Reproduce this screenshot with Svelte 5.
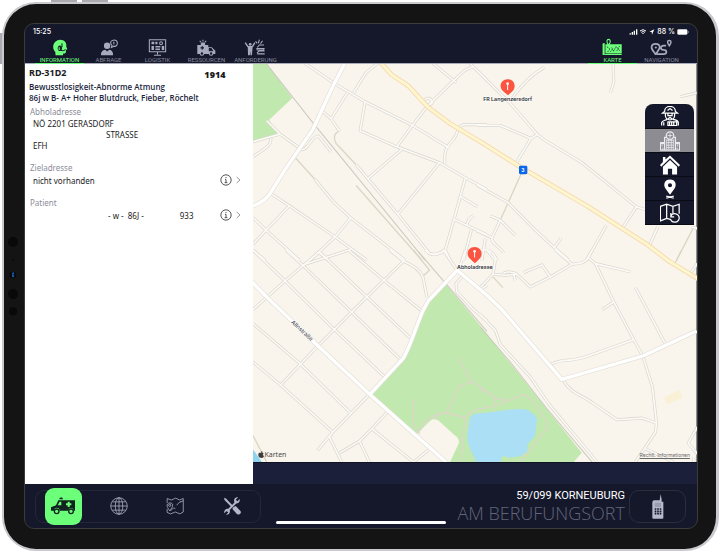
<script>
  const tabs = [
    { id: 'information', label: 'INFORMATION' },
    { id: 'abfrage', label: 'ABFRAGE' },
    { id: 'logistik', label: 'LOGISTIK' },
    { id: 'ressourcen', label: 'RESSOURCEN' },
    { id: 'anforderung', label: 'ANFORDERUNG' }
  ];
  const mapTabs = [
    { id: 'karte', label: 'KARTE' },
    { id: 'navigation', label: 'NAVIGATION' }
  ];
  let activeTab = $state('information');
  let activeMapTab = $state('karte');
  let activeLayer = $state('hospital');

  const layers = [
    { id: 'crew', label: 'Einsatzkraft' },
    { id: 'hospital', label: 'Krankenhaus' },
    { id: 'home', label: 'Wache' },
    { id: 'pin', label: 'Einsatzort' },
    { id: 'reset', label: 'Karte zurücksetzen' }
  ];
  const tools = [
    { id: 'globe', label: 'Web' },
    { id: 'plan', label: 'Plan' },
    { id: 'settings', label: 'Werkzeuge' }
  ];

  // Street network, split into four quadrants with their own origin
  const quads = [
    {
      at: '-9 -12',
      streets: [
        'M165 10L255 72 345 125 485 195 595 262',
        'M292 98L243 176 M218 155L243 176 268 213',
        'M345 125L330 212 440 260 568 308 640 350 710 388',
        'M310 98L348 38 382 10',
        'M610 62L530 140 485 198 440 260 M455 268L352 356',
        'M548 10L618 68 M610 62L645 30 668 20 710 60 M668 20L660 10',
        'M530 140C510 120 535 105 545 122 550 132 538 135 530 135',
        'M710 194H640C620 200 625 215 612 235 590 260 580 270 584 312',
        'M568 308L443 462',
        'M318 314L443 462 538 580C555 585 570 580 585 570L612 475 645 355',
        'M632 410L682 440 M612 478L710 524 M650 495C652 478 662 470 670 465 M663 510L640 600',
        'M50 182L90 222 150 265 M9 245L90 222 M62 235C65 250 58 258 9 290',
        'M150 268C175 275 180 230 205 228L243 275',
        'M195 358L250 425 302 473 465 600',
        'M62 400L118 437 255 530 350 600',
        'M118 437L48 510 9 552 M302 473L255 530 180 600',
        'M9 472L48 510 148 600 M9 570L45 600 M205 575L235 600 M585 570L600 600'
      ],
      tracks: ['M135 292L195 358', 'M310 98L320 80', 'M268 213C250 220 250 235 258 250L318 314', 'M318 376L515 600'],
      rails: ['M50 12L190 190 525 600']
    },
    {
      at: '681 -12',
      streets: [
        'M-5 36L90 130 170 222 190 238 305 308 468 440 500 450',
        'M95 115C120 80 150 45 192 22',
        'M-10 196H60L152 235 170 224 M152 235L108 308',
        'M398 12L400 65 390 98 M600 110L648 98',
        'M-10 375L83 427 160 505 222 562 265 600',
        'M222 562L242 534 M378 495L320 598 M468 440L423 508',
        'M30 467L60 480 105 525 M60 480L35 532 C30 550 60 560 70 578',
        'M-10 512L35 532 M15 535L5 600 M5 570C30 565 40 580 50 600',
        'M532 500L505 560 M632 500L650 505'
      ],
      tracks: ['M122 342L60 480', 'M640 500L588 600'],
      rails: []
    },
    {
      at: '-9 558',
      streets: [
        'M9 0L105 92 250 235 402 378',
        'M108 0L158 45 302 183 448 325',
        'M208 5L350 140 482 265',
        'M295 0L407 95 515 182',
        'M420 0L460 33C490 45 510 60 518 80L530 140',
        'M210 3L105 92 9 178 M302 -2L155 45',
        'M460 33L350 140 205 285 92 404',
        'M9 220L150 340 302 488 M9 335L92 404 248 545',
        'M358 432L248 545 202 600 M248 545L238 560 275 635',
        'M412 485L365 535 328 572 268 608 M328 572L358 635 M365 535L490 635 M535 598L490 635',
        'M525 0C540 15 560 20 580 0L620 60 M632 38L645 0',
        'M640 75L617 100 620 125 670 178 710 212 M692 118L710 105'
      ],
      tracks: ['M490 0L538 60 515 80', 'M9 555L50 635'],
      rails: ['M505 5L710 243']
    },
    {
      at: '681 558',
      streets: [
        'M0 112L38 72 45 30 20 0 M38 72L75 75 110 72 150 110 210 80 275 42C300 40 315 38 323 22L335 0',
        'M70 70C75 62 100 65 110 72 M100 72L105 90 M130 67L185 44 210 80 M225 0L275 42',
        'M323 22L345 40 400 155 460 268 487 318',
        'M345 40L450 65 M400 155L365 178 M465 112L553 278',
        'M460 268L320 318C250 340 260 320 210 342',
        'M0 193L45 240 60 282 150 380 205 460 350 635',
        'M248 388C270 430 300 430 340 460L410 508 485 503 528 518',
        'M487 318L516 410 528 518 525 545 465 635 M495 595L580 635',
        'M650 530L623 578 650 610 M640 620V640 M632 66L650 40'
      ],
      tracks: ['M38 80L68 112', 'M603 0L583 40'],
      rails: ['M0 230L90 335 200 475 335 635']
    }
  ];
  const avenues = [
    'M274 0L240 65 180 195 95 318 50 390C35 410 15 420 -6 428',
    'M-6 650L40 697 195 845 350 990 490 1115 580 1194',
    'M350 990L450 882C475 840 490 780 510 738L525 710 612 618 700 692 745 735 925 945 1168 875 1329 800'
  ];
</script>

{#snippet icon(id)}
  <svg class="icon" viewBox="0 0 48 48" aria-hidden="true">
    {#if id === 'information'}
      <path fill="currentColor" d="M26 2C38 2 45 11 43 21L46 29 42 31V38L39 41H34V46H13L12 36C2 28 4 3 26 2Z" />
      <path d="M31 12V23M25 31C32 34 38 33 41 29" fill="none" stroke="#17202b" stroke-width="3" />
      <ellipse cx="25" cy="26" rx="6" ry="8" fill="#17202b" /><path d="M23 23V31" stroke="#6cff7a" stroke-width="3" />
    {:else if id === 'abfrage'}
      <circle cx="20" cy="19" r="9" fill="currentColor" />
      <path fill="currentColor" d="M3 46C2 36 7 31 15 30L20 35 26 30C34 31 37 36 37 46Z" />
      <path d="M35 4C43 1 50 5 49 13 48 19 43 22 38 21L32 24 34 18C28 13 29 6 35 4ZM39 8V14M39 16V18" fill="none" stroke="currentColor" stroke-width="3" />
    {:else if id === 'logistik'}
      <path d="M1 2H47V36H1ZM24 36V44M14 46H34" fill="none" stroke="currentColor" stroke-width="3" />
      <path d="M7 8H15V15H7ZM18 8H24V15H18ZM36 20H43V31H36ZM18 20H32V24H18ZM18 27H31V31H18ZM7 20H14V31H7Z" fill="currentColor" />
      <circle cx="34" cy="12" r="4" fill="none" stroke="currentColor" stroke-width="3" />
    {:else if id === 'ressourcen'}
      <path fill="currentColor" d="M-2 17H29V23H39L49 33V42H-2ZM8 10H20V17H8Z" />
      <path d="M5 5L8 9M14 2V7M23 5L20 9" stroke="currentColor" stroke-width="3" />
      <path d="M12 20V30M7 25H17M32 27H37L41 33H32Z" stroke="#15182b" stroke-width="3" fill="#15182b" />
      <circle cx="11" cy="41" r="5" fill="#15182b" stroke="currentColor" stroke-width="3" /><circle cx="37" cy="41" r="5" fill="#15182b" stroke="currentColor" stroke-width="3" />
    {:else if id === 'anforderung'}
      <circle cx="9" cy="15" r="4" fill="currentColor" />
      <path d="M-5 10L3 22M15 22L22 10" fill="none" stroke="currentColor" stroke-width="4" />
      <path d="M2 20H16L14 46H10L9 34 8 46H3Z" fill="currentColor" />
      <path d="M24 7L29 12M35 2L32 12M44 5L38 13M29 24L35 17H48M28 27H48L47 31H29ZM28 40L34 34H50M29 42H50" fill="none" stroke="currentColor" stroke-width="3" />
    {:else if id === 'karte'}
      <path fill="currentColor" d="M-4 13L2 11V45H-4ZM4 15H50V41H4Z" /><path fill="currentColor" d="M2 42H50V45H2Z" />
      <path d="M8 22L17 28 10 37M22 24L27 35 34 21 45 34M36 34L44 20M18 36L25 27" fill="none" stroke="#15182b" stroke-width="2" stroke-dasharray="4 2" />
      <path d="M12 16C6 7 8 1 13 1S20 7 14 16Z" fill="#15182b" stroke="currentColor" stroke-width="3" />
    {:else if id === 'navigation'}
      <path d="M7 43C1 34-5 29-4 23-3 11 18 11 19 23 19 28 13 35 8 43Z" fill="none" stroke="currentColor" stroke-width="5" />
      <circle cx="8" cy="24" r="3" fill="currentColor" />
      <path d="M10 43H29C41 43 40 31 30 31 19 30 20 18 31 19H37" fill="none" stroke="currentColor" stroke-width="5" />
      <path d="M46 19C39 9 40 4 46 4S53 9 46 19Z" fill="none" stroke="currentColor" stroke-width="4" />
    {:else if id === 'crew'}
      <path d="M11 13C11-3 37-3 37 13L42 17H6L11 13ZM13 17V24C15 36 33 36 35 24V17M18 11L24 6 30 11M19 18V23H29V18M19 31L24 27 29 31" fill="none" stroke="currentColor" stroke-width="3" />
      <path d="M4 47V40C5 35 11 35 17 32M31 32C38 34 43 34 44 40V47M9 39V47M19 38H40V47H19ZM23 38V46M28 38V46M33 38V46" fill="none" stroke="currentColor" stroke-width="3" />
    {:else if id === 'hospital'}
      <path d="M11 46V15H37V46M0 46H48M1 45V30H11M37 30H47V45M0 28H11M37 28H48" fill="none" stroke="currentColor" stroke-width="3" />
      <circle cx="24" cy="11" r="9" fill="#8d8c93" stroke="currentColor" stroke-width="3" />
      <path d="M24 5V17M18 11H30M16 22H32M16 28H32M16 34H32M16 40H32M16 20V45M21 20V45M27 20V45M32 20V45M5 33V37M7 40V45M42 33V37M41 40V45" stroke="currentColor" stroke-width="2" />
    {:else if id === 'home'}
      <path fill="currentColor" d="M24 1L48 24 45 28 24 8 3 28 0 24 7 17V5H13V11ZM7 28L24 12 41 28V47H29V33H19V47H7Z" />
    {:else if id === 'pin'}
      <path fill="currentColor" fill-rule="evenodd" d="M24 1C37 1 41 13 35 23L24 38 13 23C7 13 11 1 24 1ZM24 10A5 5 0 1 0 24 20A5 5 0 1 0 24 10Z" />
      <path d="M15 41L33 46M33 41L15 46" stroke="currentColor" stroke-width="3" />
    {:else if id === 'reset'}
      <path d="M27 40L16 37 1 43V8L16 3 31 8 46 3V26M16 3V37M31 8V25" fill="none" stroke="currentColor" stroke-width="3" />
      <path d="M26 32C30 21 47 25 46 37 44 49 29 48 26 41M26 24V33H34" fill="none" stroke="currentColor" stroke-width="3" />
    {:else if id === 'globe'}
      <circle cx="24" cy="24" r="22" fill="none" stroke="currentColor" stroke-width="2" />
      <ellipse cx="24" cy="24" rx="10" ry="22" fill="none" stroke="currentColor" stroke-width="2" />
      <path d="M24 2V46M2 24H46M6 13H42M6 35H42" stroke="currentColor" stroke-width="2" />
    {:else if id === 'plan'}
      <path d="M3 4L14 8 26 3 36 8 46 4V40L37 45 25 40 12 45 3 41V32M3 4V16M37 14L46 10M12 37L20 29 25 31M28 22L38 12" fill="none" stroke="currentColor" stroke-width="2" />
      <path d="M10 37C5 29 2 26 3 21 5 14 17 14 18 21 18 26 14 31 10 37Z" fill="none" stroke="currentColor" stroke-width="2" /><circle cx="10" cy="22" r="3" fill="none" stroke="currentColor" stroke-width="2" />
    {:else if id === 'settings'}
      <path d="M3 2L8 4 27 24 23 27 4 8ZM27 27L34 24 47 38C50 44 43 50 37 45L25 32Z" fill="currentColor" />
      <path d="M35 14L12 37" stroke="currentColor" stroke-width="5" />
      <path d="M45 5L38 11 34 7 40 1C31 0 27 8 31 15 36 20 46 15 45 5ZM3 43L10 37 14 41 8 47C17 48 21 40 17 33 12 28 2 33 3 43Z" fill="currentColor" />
    {/if}
  </svg>
{/snippet}

{#snippet details(label)}
  <button class="details" aria-label={label}>
    <svg viewBox="0 0 36 36" width="12" height="12" aria-hidden="true">
      <circle cx="18" cy="18" r="15.5" fill="none" stroke="#333" stroke-width="2.5" />
      <path d="M18 9V12M15 16H18V26M14 26H22" fill="none" stroke="#333" stroke-width="2.5" />
    </svg>
    <svg viewBox="0 0 15 24" width="5" height="8" aria-hidden="true">
      <path d="M2 3L12 12 2 21" fill="none" stroke="#999" stroke-width="3" />
    </svg>
  </button>
{/snippet}

<div class="stage">
  <i class="key power"></i><i class="key volume"></i><i class="key mute"></i>
  <div class="device">
    <svg class="sensors" viewBox="0 0 36 240" aria-hidden="true">
      <g fill="#090909"><circle cx="18" cy="15" r="15" /><circle cx="18" cy="68" r="3" /><circle cx="18" cy="114" r="10" /><circle cx="18" cy="171" r="15" /><circle cx="18" cy="223" r="12" /></g>
      <path d="M15 108L20 105 22 110 18 112 22 115 21 121 15 120Z" fill="#1455a5" />
    </svg>
    <div class="screen">
      <header>
        <div class="status">
          <time>15:25</time>
          <div class="signals">
            <svg viewBox="0 0 78 18" width="26" height="6" aria-hidden="true">
              <path d="M2 12H5V17H2ZM8 9H12V17H8ZM14 5H18V17H14ZM21 1H25V17H21Z" fill="#fff" />
              <path d="M33 6Q42-2 51 6M37 10Q42 5 48 10" fill="none" stroke="#fff" stroke-width="3" /><path d="M39 12H45L42 16Z" fill="#fff" />
              <path d="M61 8L76 1 69 17 68 9Z" fill="#fff" />
            </svg>
            <span>88 %</span>
            <svg viewBox="0 0 36 18" width="12" height="6" aria-hidden="true"><rect x="1" y="1" width="30" height="16" rx="4" fill="#fff" stroke="#aaa" /><path d="M34 6V12" stroke="#aaa" stroke-width="2" /></svg>
          </div>
        </div>
        <nav>
          {#each tabs as tab}
            <button class:active={activeTab === tab.id} onclick={() => (activeTab = tab.id)}>{@render icon(tab.id)}<span>{tab.label}</span></button>
          {/each}
          <div class="spacer"></div>
          {#each mapTabs as tab}
            <button class:active={activeMapTab === tab.id} onclick={() => (activeMapTab = tab.id)}>{@render icon(tab.id)}<span>{tab.label}</span></button>
          {/each}
        </nav>
      </header>

      <main>
        <section class="panel">
          <div class="head"><h1>RD-31D2</h1><b>1914</b></div>
          <p class="summary">Bewusstlosigkeit-Abnorme Atmung<br />86j w B- A+ Hoher Blutdruck, Fieber, Röchelt</p>
          <h2>Abholadresse</h2>
          <address>NÖ 2201 GERASDORF<br /><span class="street">STRASSE</span><br />EFH</address>
          <h2>Zieladresse</h2>
          <div class="row"><span>nicht vorhanden</span>{@render details('Zieladresse anzeigen')}</div>
          <h2>Patient</h2>
          <div class="row"><span class="person">- w -&nbsp; 86J -</span><span class="number">933</span>{@render details('Patient anzeigen')}</div>
        </section>

        <section class="mapside">
          <div class="map">
            <svg class="canvas" viewBox="0 0 1329 1194" preserveAspectRatio="xMidYMid slice">
              <rect width="1329" height="1194" fill="#f9f5ec" />
              <path d="M0 0H42L118 102 48 168 75 208 0 231Z" fill="#c1e8ae" />
              <path d="M350 990L450 882C475 840 490 780 510 738L525 710 578 660 690 795 985 1165 960 1194H590L616 1138C620 1126 613 1118 605 1113L560 1072C545 1058 535 1064 527 1073L490 1110Z" fill="#c1e8ae" />
              <path d="M662 1048L705 1044 770 1035 812 1034C830 1040 850 1052 851 1065L845 1115 822 1140 823 1160 800 1175 770 1180 748 1174 741 1194H670C660 1170 640 1140 642 1115L650 1060Z" fill="#abdff5" />
              <path d="M0 1155L28 1194H-4Z" fill="#8fd4ee" />
              <path d="M1231 1000L1278 976 1287 1001 1241 1020Z" fill="#faf0d6" />
              <g fill="none" stroke="#ddd6c8" stroke-width="4">
                <path d="M492 1007H480V1078L500 1108M500 1100C510 1060 550 1050 578 1045L636 1060M578 1045C600 1020 610 975 618 965L657 952M616 880C630 915 645 935 655 950L715 993M560 1045L545 1065M623 1190L636 1060C650 1038 680 1032 724 1025L805 992C825 990 840 1010 850 1025 890 1085 885 1080 875 1100L800 1194M681 973L724 998V1022M724 1000L760 1008" />
              </g>
              {#each quads as quad}
                <g transform="translate({quad.at})">
                  {#each quad.tracks as d}<path class="track" {d} />{/each}
                  {#each quad.rails as d}<path class="rail" {d} />{/each}
                  {#each quad.streets as d}<path class="casing" {d} />{/each}
                </g>
              {/each}
              {#each quads as quad}
                <g transform="translate({quad.at})">
                  {#each quad.streets as d}<path class="street-fill" {d} />{/each}
                </g>
              {/each}
              {#each avenues as d}<path class="avenue-edge" {d} />{/each}
              {#each avenues as d}<path class="avenue" {d} />{/each}
              <path class="highway-edge" d="M382-5L415 32 465 65 525 130 590 178 695 241 800 308 1000 425 1180 540 1245 590 1335 645" />
              <path class="highway" d="M382-5L415 32 465 65 525 130 590 178 695 241 800 308 1000 425 1180 540 1245 590 1335 645" />
              <rect x="797" y="305" width="25" height="25" rx="4" fill="#0a66ea" />
              <text x="809" y="323" class="shield">3</text>
              <text class="road-name" transform="translate(113 775) rotate(43)">Allnstraße</text>
              <g class="marker">
                <path d="M763 46C776 46 784 55 784 66 784 79 773 86 764 94 755 86 742 79 742 66 742 55 750 46 763 46Z" />
                <path class="stem" d="M763 61V78" /><circle cx="763" cy="59" r="4" />
                <text x="763" y="111">FR Langenzersdorf</text>
              </g>
              <g class="marker">
                <path d="M664 548C677 548 685 557 685 568 685 581 674 588 665 597 656 588 643 581 643 568 643 557 651 548 664 548Z" />
                <path class="stem" d="M664 563V580" /><circle cx="664" cy="561" r="4" />
                <text x="665" y="613">Abholadresse</text>
              </g>
            </svg>
            <div class="layers">
              {#each layers as layer}
                <button class:selected={activeLayer === layer.id} aria-label={layer.label} onclick={() => (activeLayer = layer.id)}>{@render icon(layer.id)}</button>
              {/each}
            </div>
            <span class="brand"><svg viewBox="0 0 18 21" width="6" height="7" aria-hidden="true"><path d="M9 6C12 4 15 4 17 7 13 10 14 14 18 15 16 20 13 22 9 20 5 22 2 19 1 13 0 5 5 4 9 6ZM9 5C9 2 11 0 13 0 13 3 11 5 9 5Z" fill="#3d3d3d" /></svg>Karten</span>
            <a class="legal" href="#info">Rechtl. Informationen</a>
          </div>
          <div class="strip"></div>
        </section>
      </main>

      <footer>
        <div class="dock">
          <button class="alarm" aria-label="Einsatz">
            <svg viewBox="0 0 75 54" width="25" height="18" aria-hidden="true">
              <path d="M0 31L15 25 22 10H72V41H68A8 8 0 0 0 52 41H26A8 8 0 0 0 9 41H0Z" fill="#10231e" />
              <path d="M20 25L26 14H31V25Z" fill="#6cff7a" /><path d="M53 14V30M45 22H61" stroke="#6cff7a" stroke-width="6" />
              <path d="M25 7C25 0 36 0 36 7Z" fill="#10231e" />
              <g fill="#6cff7a" stroke="#10231e" stroke-width="4"><circle cx="17" cy="43" r="7" /><circle cx="60" cy="43" r="7" /></g>
            </svg>
          </button>
          {#each tools as tool}
            <button class="tool" aria-label={tool.label}>{@render icon(tool.id)}</button>
          {/each}
        </div>
        <div class="unit"><strong>59/099 KORNEUBURG</strong><span>AM BERUFUNGSORT</span></div>
        <button class="radio" aria-label="Funkgerät">
          <svg viewBox="0 0 36 78" width="12" height="26" aria-hidden="true">
            <path d="M26 3L29 20V26H34V74Q34 77 31 77H4Q1 77 1 74V26L5 22H23Z" fill="#b6b9cc" />
            <path d="M8 29H27V42H8Z" fill="#9a9db2" /><path d="M8 48H28M8 55H28M8 62H28" stroke="#15182b" stroke-width="5" stroke-dasharray="5 2.5" />
          </svg>
        </button>
      </footer>
      <i class="home-bar"></i>
    </div>
  </div>
</div>

<style>
  :global(body) { margin: 0; background: #fff; }
  * { box-sizing: border-box; }
  button { border: 0; padding: 0; margin: 0; background: none; color: inherit; font: inherit; cursor: pointer; }
  .stage { position: relative; min-height: 100vh; display: flex; padding: 2px 1px 1px 2px; font-family: "Noto Sans", "Open Sans", sans-serif; }
  .key { position: absolute; background: #aaaab0; }
  .power { left: 51px; top: 0; width: 26px; height: 3px; }
  .volume { left: 82px; top: 0; width: 26px; height: 3px; }
  .mute { left: 0; top: 33px; width: 3px; height: 31px; }
  .device { position: relative; flex: 1; display: flex; padding: 20px 19px 21px 21px; background: #141414; border: 2px solid #c9c9ce; border-right-width: 3px; border-radius: 34px; }
  .sensors { position: absolute; left: 3px; top: 233px; width: 12px; height: 80px; }
  .screen { position: relative; flex: 1; min-width: 0; display: flex; flex-direction: column; border-radius: 9px; overflow: hidden; background: #15182b; outline: 1px solid #3b3c40; }

  header { color: #85889b; }
  .status { display: flex; justify-content: space-between; align-items: center; height: 15px; padding: 0 8px; color: #fff; font: 500 7px/8px Inter, sans-serif; }
  .signals { display: flex; align-items: center; gap: 2px; }
  nav { display: flex; height: 25px; border-bottom: 1px solid #a9abb9; }
  nav button { width: 49px; height: 25px; display: flex; flex-direction: column; align-items: center; font: 400 6px/7px Roboto, sans-serif; border-bottom: 1px solid transparent; }
  nav button:first-child { margin-left: 10px; }
  nav button:last-child { margin-right: 11px; }
  nav button.active { color: #6cff7a; border-color: #6cff7a; }
  .spacer { flex: 1; }
  nav .icon { width: 17px; height: 17px; overflow: visible; color: #a7aabd; }
  nav .active .icon { color: #6cff7a; }

  main { display: flex; flex: 1; }
  .panel { width: 34%; background: #fff; padding: 3px 12px 0 4px; color: #1b1b1d; font-size: 8px; line-height: 11px; }
  .head { display: flex; justify-content: space-between; height: 14px; padding-right: 16px; font-size: 9px; line-height: 11px; font-weight: 700; }
  .head b { padding-top: 2px; }
  h1 { margin: 0; font-size: 9px; line-height: 11px; }
  .summary { margin: 0; color: #1c1f3d; font-family: "Open Sans", sans-serif; font-weight: 600; white-space: nowrap; }
  h2 { margin: 3px 0 0 1px; color: #8b8c99; font-size: 8px; line-height: 12px; font-weight: 400; }
  address { margin: 0 0 11px 4px; font-style: normal; }
  .street { margin-left: 73px; }
  .row { display: flex; align-items: center; height: 12px; margin: 0 0 8px 4px; }
  .row + h2 { margin-top: 11px; }
  .person { margin-left: 75px; }
  .number { margin-left: 36px; }
  .details { display: flex; align-items: center; gap: 4px; margin-left: auto; }
  .row { margin-bottom: 0; }

  .mapside { flex: 1; min-width: 0; display: flex; flex-direction: column; }
  .map { position: relative; flex: 1; display: flex; overflow: hidden; }
  .canvas { display: block; width: 100%; height: auto; }
  .strip { height: 22px; background: #1c1f3a; border-top: 1px solid #101224; }
  .canvas path { stroke-linejoin: round; }
  .casing { fill: none; stroke: #d9d6cd; stroke-width: 9; }
  .street-fill { fill: none; stroke: #fcfaf6; stroke-width: 5; }
  .track { fill: none; stroke: #dad6c6; stroke-width: 4; }
  .rail { fill: none; stroke: #cbc8c2; stroke-width: 3; }
  .avenue-edge { fill: none; stroke: #e4e0d8; stroke-width: 14; }
  .avenue { fill: none; stroke: #fff; stroke-width: 10; }
  .highway-edge { fill: none; stroke: #f6d7ab; stroke-width: 14; }
  .highway { fill: none; stroke: #fdf6cf; stroke-width: 9; }
  .shield { font: 700 15px Inter, sans-serif; fill: #fff; text-anchor: middle; }
  .road-name { font: 500 17px Inter, sans-serif; fill: #55555a; paint-order: stroke; stroke: #fff; stroke-width: 4px; }
  .marker { fill: #fb5440; }
  .marker circle { fill: #fff; }
  .stem { stroke: #fff; stroke-width: 3; }
  .marker text { font: 600 16px Inter, sans-serif; text-anchor: middle; fill: #2c2c30; paint-order: stroke; stroke: #fff; stroke-width: 3px; }
  .layers { position: absolute; right: 3px; top: 40px; width: 49px; border-radius: 8px 8px 0 0; overflow: hidden; background: #15172a; color: #fff; }
  .layers button { display: flex; justify-content: center; align-items: center; width: 100%; height: 24px; border-bottom: 1px solid #090a14; }
  .layers button:first-child { height: 25px; }
  .layers button.selected { background: #8d8c93; color: #e9e9ee; }
  .layers .icon { width: 20px; height: 20px; }
  .brand { position: absolute; left: 5px; bottom: 2px; display: flex; align-items: center; color: #4a4a4a; font-size: 7px; line-height: 11px; }
  .legal { position: absolute; right: 7px; bottom: 4px; color: #6a6a6a; font: 400 5px/6px Inter, sans-serif; }

  footer { display: flex; align-items: center; height: 44px; padding: 0 11px 0 10px; }
  .dock { display: flex; align-items: center; width: 226px; height: 33px; padding-left: 9px; border: 1px solid #24273a; border-radius: 9px; }
  .alarm { display: flex; align-items: center; justify-content: center; width: 37px; height: 37px; border-radius: 9px; background: #6cff7a; }
  .tool { width: 57px; height: 33px; display: flex; align-items: center; justify-content: center; color: #b4b7ca; }
  .alarm + .tool { margin-left: 9px; }
  .tool .icon { width: 18px; height: 18px; }
  .unit { flex: 1; text-align: right; padding-right: 4px; white-space: nowrap; }
  .unit strong { display: block; color: #fff; font: 400 11px/14px Roboto, sans-serif; }
  .unit span { display: block; color: #626579; font: 200 19px/20px Inter, sans-serif; }
  .unit span { font: 300 18px/20px "Open Sans", sans-serif; }
  .radio { display: flex; align-items: center; justify-content: center; width: 57px; height: 33px; border: 1px solid #2b2d3a; border-radius: 10px; }
  .home-bar { position: absolute; left: 50%; bottom: 4px; width: 170px; height: 3px; margin-left: -85px; border-radius: 2px; background: #fff; }
</style>
